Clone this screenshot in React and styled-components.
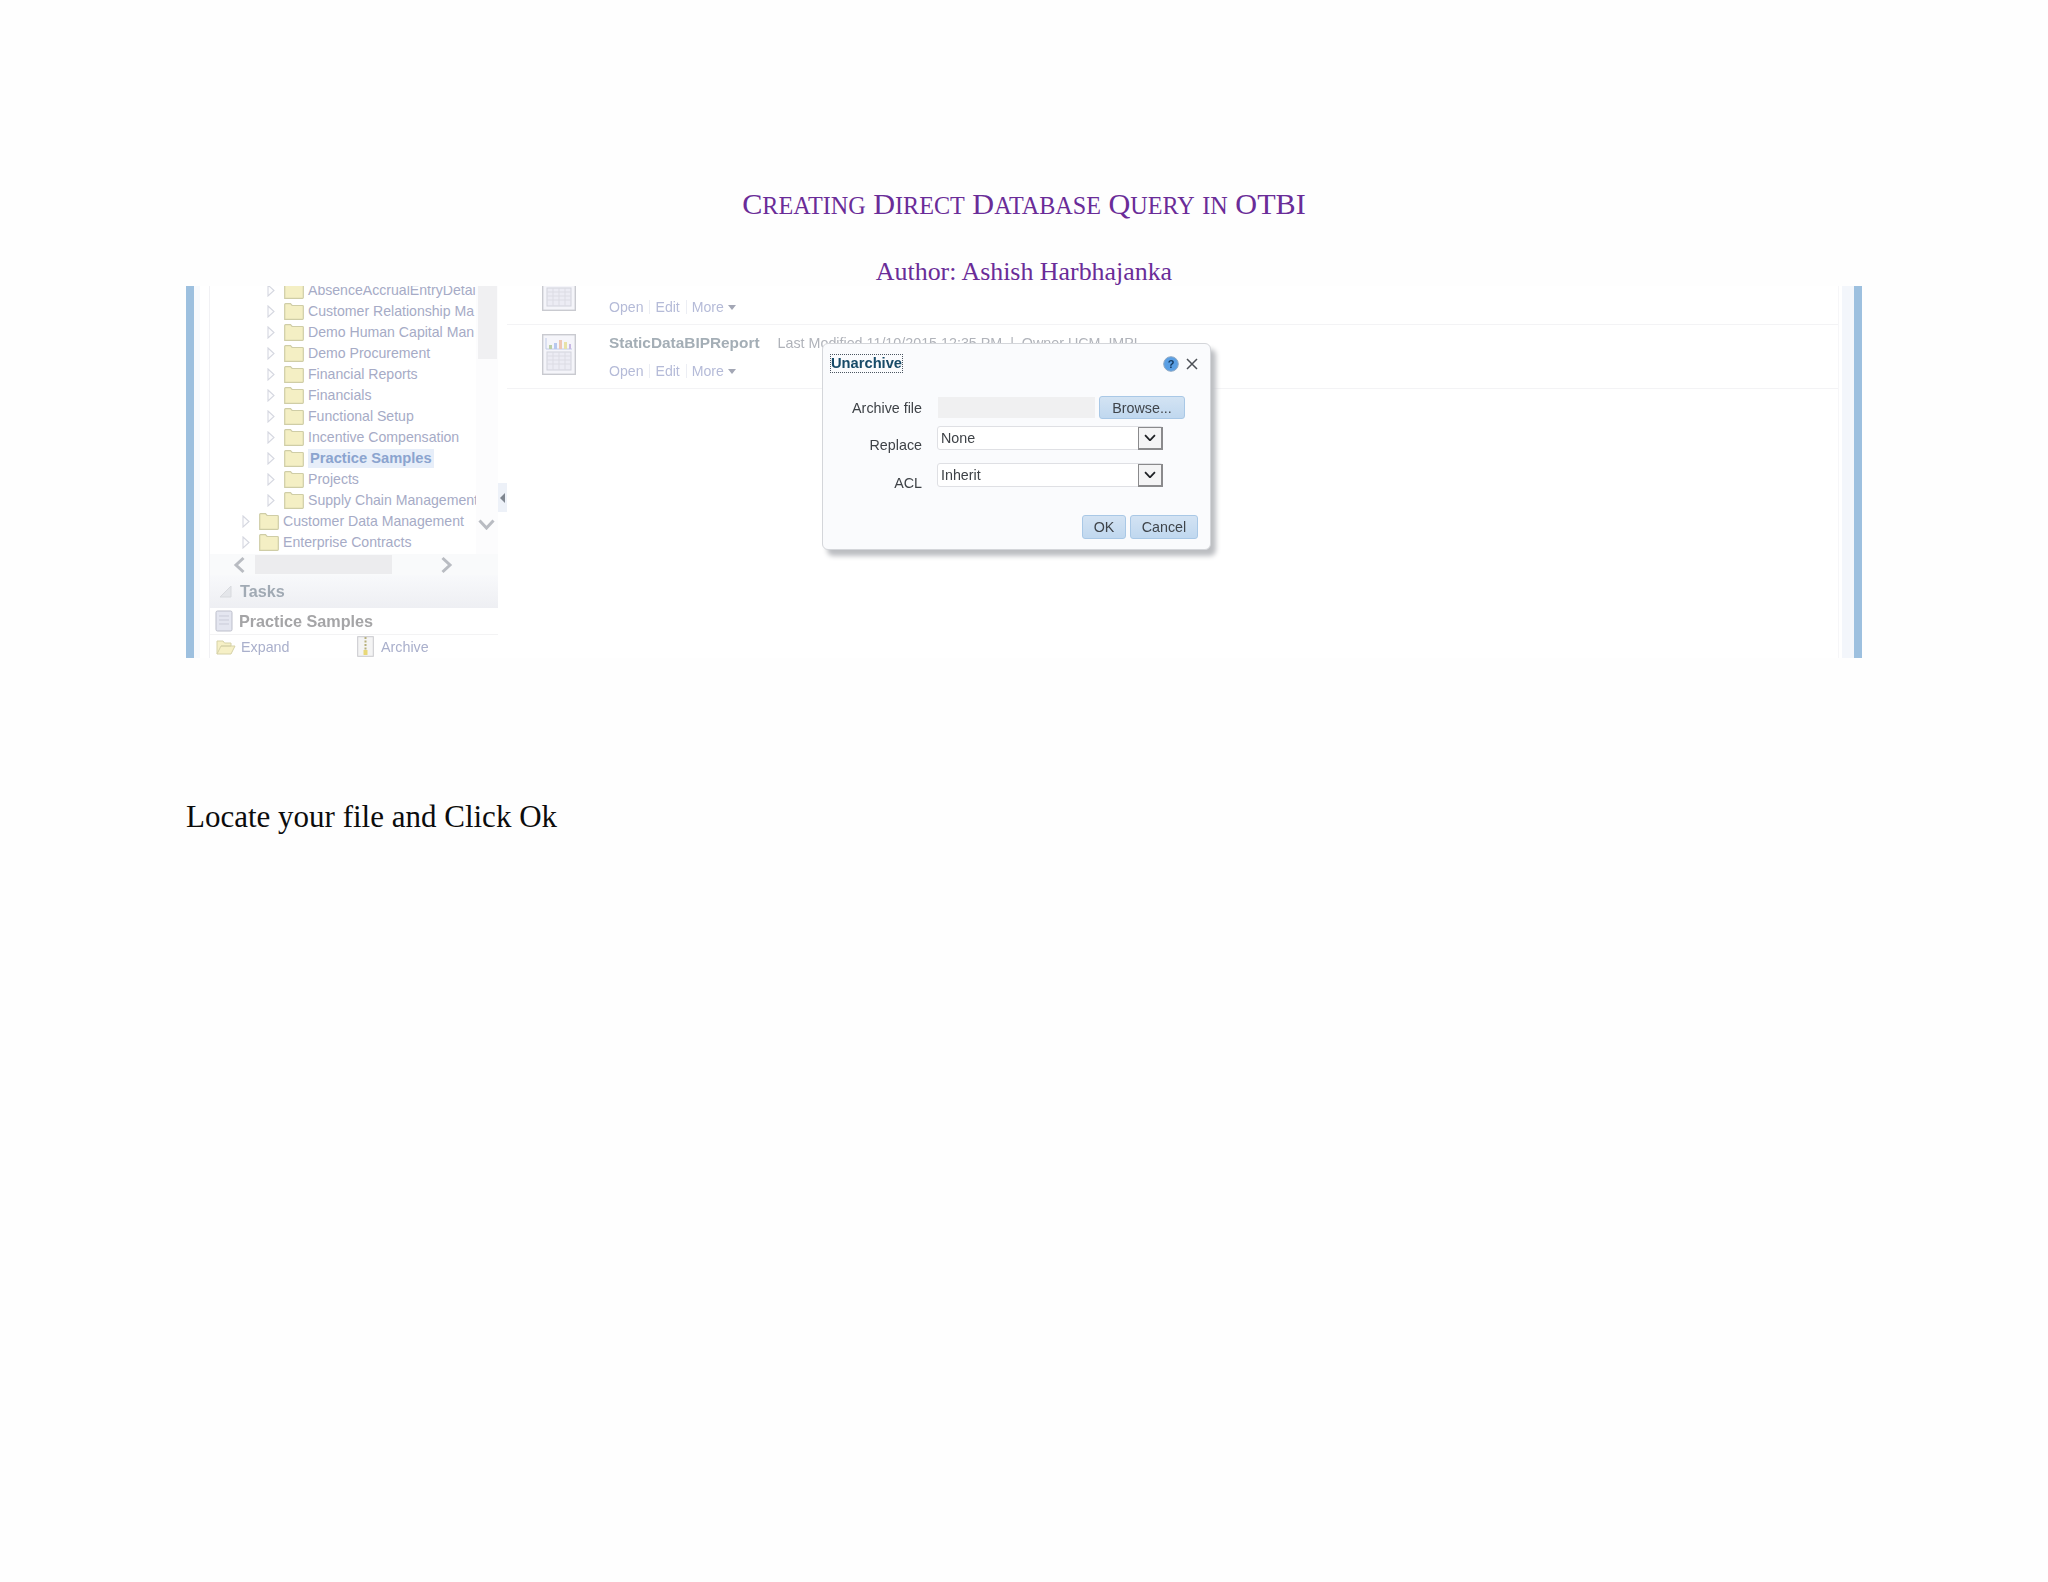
import React from "react";
import styled, { createGlobalStyle } from "styled-components";

const Global = createGlobalStyle`
  html, body { margin: 0; padding: 0; background: #fefefe; }
  body { font-family: "Liberation Serif", "Times New Roman", serif; }
`;

const Page = styled.main`
  width: 2048px;
  height: 1582px;
  box-sizing: border-box;
  padding: 186px 186px 0;
  overflow: hidden;
`;
const Title = styled.h1`
  margin: 0;
  height: 36px;
  text-align: center;
  font: 400 30.2px/37px "Liberation Serif", serif;
  color: #6a2c98;
`;
const SmallCap = styled.span`
  font-size: 0.8em;
  text-transform: uppercase;
`;
const Author = styled.h2`
  margin: 32px 0 0;
  height: 36px;
  text-align: center;
  font: 400 25.9px/36px "Liberation Serif", serif;
  color: #6a2c98;
`;
const Shot = styled.figure`
  position: relative;
  margin: -4px 0 0;
  height: 372px;
  display: flex;
  overflow: hidden;
  filter: blur(0.45px);
  font-family: "Liberation Sans", Arial, sans-serif;
`;
const Note = styled.p`
  margin: 136px 0 0;
  font: 400 31px/45px "Liberation Serif", serif;
  color: #0c0c0c;
`;

const EdgeBar = styled.div`
  flex: none;
  width: 8px;
  background: #9dc0df;
`;
const LeftGutter = styled.div`
  flex: none;
  width: 16px;
  background: linear-gradient(90deg, #f8fafd 0 6px, #fff 6px 15px, #f1f1f4 15px);
`;
const RightGutter = styled.div`
  flex: none;
  width: 16px;
  background: linear-gradient(90deg, #f6f6f8 0 1px, #fff 1px 4px, #f3f6fb 4px);
`;

const Sidebar = styled.aside`
  flex: none;
  width: 288px;
  display: flex;
  flex-direction: column;
`;
const TreeArea = styled.div`
  height: 269px;
  display: flex;
  background: #fff;
`;
const TreeClip = styled.div`
  width: 266px;
  overflow: hidden;
`;
const TreeList = styled.ul`
  list-style: none;
  margin: -6px 0 0;
  padding: 0;
`;
const TreeRow = styled.li`
  height: 21px;
  display: flex;
  align-items: center;
  padding-left: ${(p) => (p.$level === 2 ? 57 : 32)}px;
  white-space: nowrap;
`;
const TreeLabel = styled.span`
  margin-left: 4px;
  padding: 1px ${(p) => (p.$selected ? "2px" : "0")};
  font-size: ${(p) => (p.$selected ? 14.7 : 14.1)}px;
  line-height: 17px;
  font-weight: ${(p) => (p.$selected ? 700 : 400)};
  color: ${(p) => (p.$selected ? "#8ba4cf" : "#a6abc6")};
  background: ${(p) => (p.$selected ? "#e7eef9" : "transparent")};
`;
const VScroll = styled.div`
  width: 22px;
  display: flex;
  flex-direction: column;
  align-items: center;
  background: #fcfcfd;
`;
const VThumb = styled.div`
  width: 19px;
  height: 73px;
  background: #f0f0f2;
`;
const VArrow = styled.div`
  margin-top: 160px;
  margin-left: -1px;
  line-height: 0;
`;
const HScroll = styled.div`
  height: 21px;
  display: flex;
  align-items: center;
  padding-left: 23px;
  background: #f9fafb;
`;
const HThumb = styled.div`
  width: 137px;
  height: 19px;
  margin: 0 48px 0 9px;
  background: #ececee;
`;
const TasksHead = styled.div`
  height: 33px;
  display: flex;
  align-items: center;
  gap: 8px;
  padding-left: 9px;
  box-sizing: border-box;
  background: linear-gradient(#f8f9fb, #eeeff3);
  font-size: 16.2px;
  font-weight: 700;
  color: #a1aab4;
`;
const TaskName = styled.div`
  height: 26px;
  display: flex;
  align-items: center;
  gap: 6px;
  padding-left: 5px;
  font-size: 16.2px;
  font-weight: 700;
  color: #a5a5a7;
  background: #fff;
  border-bottom: 1px solid #f3f3f4;
`;
const TaskActions = styled.div`
  height: 23px;
  display: flex;
  align-items: center;
  padding-left: 6px;
  background: #fff;
  font-size: 14.3px;
  color: #aab0cc;
`;
const TaskAction = styled.span`
  display: flex;
  align-items: center;
  gap: ${(p) => p.$gap}px;
  width: ${(p) => p.$width}px;
`;

const Splitter = styled.div`
  flex: none;
  width: 9px;
  padding-top: 197px;
  background: #fff;
`;
const SplitHandle = styled.div`
  width: 9px;
  height: 29px;
  display: flex;
  align-items: center;
  justify-content: center;
  background: #edf1f8;
`;

const Main = styled.section`
  flex: 1;
  min-width: 0;
  background: #fff;
`;
const ReportRow = styled.div`
  height: 64px;
  display: flex;
  padding: 9px 0 0 35px;
  box-sizing: border-box;
  margin-top: ${(p) => (p.$first ? "-25px" : "0")};
  border-bottom: 1px solid #f3f3f5;
`;
const ReportBody = styled.div`
  margin-left: 33px;
`;
const ReportHead = styled.div`
  height: 18px;
  display: flex;
  align-items: center;
  white-space: nowrap;
  font-size: 14.3px;
  color: #b0b3ba;
`;
const ReportName = styled.strong`
  margin-right: 18px;
  font-size: 15.4px;
  color: #a4aeb6;
`;
const LinkRow = styled.div`
  height: 18px;
  margin-top: 10px;
  display: flex;
  align-items: center;
  font-size: 14.1px;
  color: #b5bbd8;
`;
const LinkSep = styled.i`
  width: 1px;
  height: 14px;
  margin: 0 5px 0 6px;
  background: #eceef4;
`;
const Caret = styled.i`
  width: 0;
  height: 0;
  margin-left: 4px;
  border: 4.5px solid transparent;
  border-top: 5px solid #a3a7b5;
  border-bottom: 0;
`;

const Dialog = styled.div`
  position: absolute;
  left: 636px;
  top: 57px;
  width: 389px;
  height: 207px;
  box-sizing: border-box;
  padding: 10px 12px 0 7px;
  border: 1px solid #d4d6da;
  border-radius: 6px;
  background: #fafbfd;
  box-shadow: 5px 6px 5px #bcbec2;
  font-size: 14.3px;
  color: #3e4247;
`;
const DialogHead = styled.div`
  display: flex;
  align-items: center;
  height: 19px;
`;
const DialogTitle = styled.strong`
  border: 1px dotted #4a5560;
  font-size: 14.7px;
  line-height: 17px;
  color: #174a68;
`;
const HeadIcons = styled.span`
  margin-left: auto;
  display: flex;
  align-items: center;
  gap: 7px;
  line-height: 0;
`;
const FormRow = styled.div`
  display: grid;
  grid-template-columns: 92px 1fr;
  column-gap: 16px;
  height: ${(p) => p.$h}px;
  margin-top: ${(p) => p.$mt}px;
`;
const FormLabel = styled.span`
  text-align: right;
  line-height: 18px;
  margin-top: ${(p) => p.$mt}px;
`;
const FileField = styled.div`
  display: flex;
  align-items: center;
`;
const FileInput = styled.div`
  width: 157px;
  height: 21px;
  background: #f0f0f1;
`;
const Btn = styled.button`
  box-sizing: border-box;
  width: ${(p) => p.$w}px;
  height: ${(p) => p.$h}px;
  margin-left: ${(p) => p.$ml}px;
  padding: 0;
  border: 1px solid #a9c8e6;
  border-radius: 3px;
  background: linear-gradient(#d3e3f3, #c0d8ef);
  font: 400 14.3px "Liberation Sans", Arial, sans-serif;
  color: #3f444a;
`;
const Select = styled.div`
  box-sizing: border-box;
  width: 226px;
  height: 24px;
  display: flex;
  align-items: center;
  margin-left: -1px;
  padding-left: 3px;
  border: 1px solid #dfe0e4;
  border-radius: 3px;
  background: #fff;
  line-height: 18px;
`;
const SelectBtn = styled.span`
  margin-left: auto;
  margin-right: -1px;
  box-sizing: border-box;
  width: 25px;
  height: 23px;
  display: flex;
  align-items: center;
  justify-content: center;
  border: 2px solid #8a8a8c;
  border-width: 1px 2px 2px 1px;
  background: #f4f4f5;
`;
const DialogFooter = styled.div`
  display: flex;
  justify-content: flex-end;
  gap: 4px;
  margin: 28px 0 0;
`;

const Chevron = ({ color = "#d5d7e0" }) => (
  <svg width="8" height="13" viewBox="0 0 8 13" fill="none" style={{ flex: "none" }}>
    <path d="M1 1l6 5.500L1 12z" stroke={color} strokeWidth="1.100" fill="#fdfdfe" />
  </svg>
);
const Folder = () => (
  <svg width="20" height="17" viewBox="0 0 20 17" style={{ marginLeft: 9, flex: "none" }}>
    <path d="M.7 16.300V1.500q0-.8.8-.8h5l1.600 1.800h10.400q.8 0 .8.8v12.200q0 .8-.8.8z" fill="#f4efc4" stroke="#cfcda6" strokeWidth="1.200" />
  </svg>
);
const ReportIcon = ({ chart }) => (
  <svg width="34" height="41" viewBox="0 0 34 41" fill="none" style={{ flex: "none" }}>
    <rect x=".7" y=".7" width="32.600" height="39.600" fill="#f5f5fa" stroke="#c9cad0" strokeWidth="1.400" />
    {chart && (
      <g>
        <path d="M4 4v11h26" stroke="#c2cce8" />
        <path d="M7 11h3v4H7z" fill="#bcd0a8" />
        <path d="M12 9h3v6h-3z" fill="#b8c8ee" />
        <path d="M17 6h3v9h-3z" fill="#eec7b4" />
        <path d="M22 8h3v7h-3z" fill="#e8e2a8" />
        <path d="M27 10h2v5h-2z" fill="#c8b8e4" />
      </g>
    )}
    <rect x="5" y="18" width="24" height="18" fill="#ececf4" stroke="#d2d3dc" />
    <path d="M5 22h24M5 26h24M5 30h24M11 18v18M17 18v18M23 18v18" stroke="#dcdce4" />
  </svg>
);
const SmallChevron = ({ dir }) => (
  <svg width="13" height="18" viewBox="0 0 13 18" fill="none">
    <path d={dir === "left" ? "M10.500 2L3 9l7.500 7" : "M2.500 2L10 9l-7.500 7"} stroke="#b9bcc2" strokeWidth="3" />
  </svg>
);
const DownArrow = ({ color = "#b9bcc2", w = 17, sw = 3 }) => (
  <svg width={w} height={w * 0.65} viewBox="0 0 17 11" fill="none">
    <path d="M1.500 1.500L8.500 9l7-7.500" stroke={color} strokeWidth={sw} />
  </svg>
);

const tree = [
  ["AbsenceAccrualEntryDetai", 2],
  ["Customer Relationship Ma", 2],
  ["Demo Human Capital Man", 2],
  ["Demo Procurement", 2],
  ["Financial Reports", 2],
  ["Financials", 2],
  ["Functional Setup", 2],
  ["Incentive Compensation", 2],
  ["Practice Samples", 2, true],
  ["Projects", 2],
  ["Supply Chain Management", 2],
  ["Customer Data Management", 1],
  ["Enterprise Contracts", 1],
];

const Links = () => (
  <LinkRow>
    Open<LinkSep />Edit<LinkSep />More<Caret />
  </LinkRow>
);

export default function App() {
  return (
    <Page>
      <Global />
      <Title>
        C<SmallCap>reating</SmallCap> D<SmallCap>irect</SmallCap> D<SmallCap>atabase</SmallCap> Q<SmallCap>uery</SmallCap> <SmallCap>in</SmallCap> OTBI
      </Title>
      <Author>Author: Ashish Harbhajanka</Author>
      <Shot>
        <EdgeBar />
        <LeftGutter />
        <Sidebar>
          <TreeArea>
            <TreeClip>
              <TreeList>
                {tree.map(([name, level, selected]) => (
                  <TreeRow key={name} $level={level}>
                    <Chevron />
                    <Folder />
                    <TreeLabel $selected={selected}>{name}</TreeLabel>
                  </TreeRow>
                ))}
              </TreeList>
            </TreeClip>
            <VScroll>
              <VThumb />
              <VArrow><DownArrow /></VArrow>
            </VScroll>
          </TreeArea>
          <HScroll>
            <SmallChevron dir="left" />
            <HThumb />
            <SmallChevron dir="right" />
          </HScroll>
          <TasksHead>
            <svg width="13" height="13" viewBox="0 0 13 13"><path d="M12 1v11H1z" fill="#e4e6ea" stroke="#d8dade" /></svg>
            Tasks
          </TasksHead>
          <TaskName>
            <svg width="18" height="22" viewBox="0 0 18 22" fill="none">
              <rect x="1" y="1" width="16" height="20" rx="1.500" fill="#e4e6f0" stroke="#bdbfcb" />
              <path d="M4 6h10M4 10h10M4 14h10" stroke="#c9cbd8" />
            </svg>
            Practice Samples
          </TaskName>
          <TaskActions>
            <TaskAction $gap={5} $width={141}>
              <svg width="20" height="16" viewBox="0 0 20 16" fill="none">
                <path d="M1 15V2h6l1.500 2H15v3H5L1 15h14l4-8H5" fill="#f6f0c6" stroke="#d6d2a8" />
              </svg>
              Expand
            </TaskAction>
            <TaskAction $gap={7}>
              <svg width="17" height="21" viewBox="0 0 17 21" fill="none">
                <rect x=".7" y=".7" width="15.600" height="19.600" fill="#f4f4f4" stroke="#c8c8cc" />
                <path d="M8.500 1v13" stroke="#b8b07a" strokeWidth="2" strokeDasharray="2 1.500" />
                <path d="M6.500 14h4v5h-4z" fill="#e8d878" />
              </svg>
              Archive
            </TaskAction>
          </TaskActions>
        </Sidebar>
        <Splitter>
          <SplitHandle>
            <svg width="6" height="10" viewBox="0 0 6 10"><path d="M5 0v10L0 5z" fill="#7f8690" /></svg>
          </SplitHandle>
        </Splitter>
        <Main>
          <ReportRow $first>
            <ReportIcon />
            <ReportBody>
              <ReportHead />
              <Links />
            </ReportBody>
          </ReportRow>
          <ReportRow>
            <ReportIcon chart />
            <ReportBody>
              <ReportHead>
                <ReportName>StaticDataBIPReport</ReportName>
                Last Modified 11/10/2015 12:35 PM&nbsp;&nbsp;|&nbsp;&nbsp;Owner UCM_IMPL
              </ReportHead>
              <Links />
            </ReportBody>
          </ReportRow>
        </Main>
        <RightGutter />
        <EdgeBar />
        <Dialog>
          <DialogHead>
            <DialogTitle>Unarchive</DialogTitle>
            <HeadIcons>
              <svg width="16" height="16" viewBox="0 0 16 16">
                <circle cx="8" cy="8" r="7.300" fill="#5a9fe4" stroke="#8fa9c4" />
                <text x="8" y="12" textAnchor="middle" fontSize="11" fontWeight="700" fontFamily="Liberation Sans" fill="#12375e">?</text>
              </svg>
              <svg width="12" height="12" viewBox="0 0 12 12" fill="none">
                <path d="M1 1l10 10M11 1L1 11" stroke="#4c5056" strokeWidth="1.500" />
              </svg>
            </HeadIcons>
          </DialogHead>
          <FormRow $h={23} $mt={23}>
            <FormLabel $mt={3}>Archive file</FormLabel>
            <FileField>
              <FileInput />
              <Btn $w={86} $h={23} $ml={4}>Browse...</Btn>
            </FileField>
          </FormRow>
          <FormRow $h={24} $mt={7}>
            <FormLabel $mt={10}>Replace</FormLabel>
            <Select>None<SelectBtn><DownArrow color="#1f2226" w={12} sw={2.500} /></SelectBtn></Select>
          </FormRow>
          <FormRow $h={24} $mt={13}>
            <FormLabel $mt={11}>ACL</FormLabel>
            <Select>Inherit<SelectBtn><DownArrow color="#1f2226" w={12} sw={2.500} /></SelectBtn></Select>
          </FormRow>
          <DialogFooter>
            <Btn $w={44} $h={24} $ml={0}>OK</Btn>
            <Btn $w={68} $h={24} $ml={0}>Cancel</Btn>
          </DialogFooter>
        </Dialog>
      </Shot>
      <Note>Locate your file and Click Ok</Note>
    </Page>
  );
}
